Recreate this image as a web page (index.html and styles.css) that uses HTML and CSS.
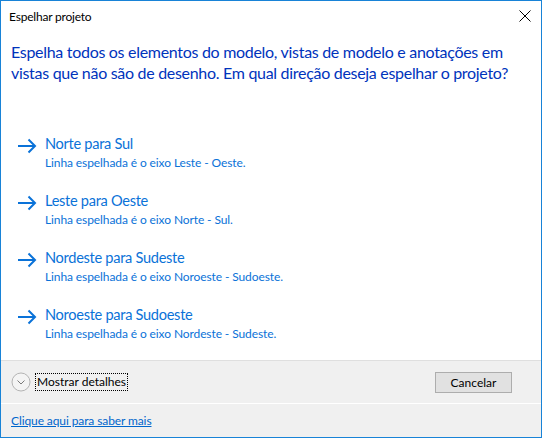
FILE: index.html
```html
<!DOCTYPE html>
<html lang="pt">
<head>
<meta charset="utf-8">
<title>Espelhar projeto</title>
<link rel="stylesheet" href="styles.css">
</head>
<body>
<div class="window">
  <div class="titlebar">
    <span class="title">Espelhar projeto</span>
    <span class="close" aria-label="Fechar">
      <svg width="12" height="12" viewBox="0 0 12 12"><path d="M0.5 0.5 L11.5 11.5 M11.5 0.5 L0.5 11.5" stroke="#000" stroke-width="1" fill="none"/></svg>
    </span>
  </div>
  <div class="content">
    <p class="instruction">Espelha todos os elementos do modelo, vistas de modelo e anotações em vistas que não são de desenho. Em qual direção deseja espelhar o projeto?</p>
    <div class="links">
      <div class="cmd">
        <svg class="arrow" width="20" height="16" viewBox="0 0 20 16"><path d="M1 8 H18 M11.5 1.5 L18 8 L11.5 14.5" stroke="currentColor" stroke-width="2" fill="none"/></svg>
        <div class="cmd-text">
          <div class="cmd-title">Norte para Sul</div>
          <div class="cmd-note">Linha espelhada é o eixo Leste - Oeste.</div>
        </div>
      </div>
      <div class="cmd">
        <svg class="arrow" width="20" height="16" viewBox="0 0 20 16"><path d="M1 8 H18 M11.5 1.5 L18 8 L11.5 14.5" stroke="currentColor" stroke-width="2" fill="none"/></svg>
        <div class="cmd-text">
          <div class="cmd-title">Leste para Oeste</div>
          <div class="cmd-note">Linha espelhada é o eixo Norte - Sul.</div>
        </div>
      </div>
      <div class="cmd">
        <svg class="arrow" width="20" height="16" viewBox="0 0 20 16"><path d="M1 8 H18 M11.5 1.5 L18 8 L11.5 14.5" stroke="currentColor" stroke-width="2" fill="none"/></svg>
        <div class="cmd-text">
          <div class="cmd-title">Nordeste para Sudeste</div>
          <div class="cmd-note">Linha espelhada é o eixo Noroeste - Sudoeste.</div>
        </div>
      </div>
      <div class="cmd">
        <svg class="arrow" width="20" height="16" viewBox="0 0 20 16"><path d="M1 8 H18 M11.5 1.5 L18 8 L11.5 14.5" stroke="currentColor" stroke-width="2" fill="none"/></svg>
        <div class="cmd-text">
          <div class="cmd-title">Noroeste para Sudoeste</div>
          <div class="cmd-note">Linha espelhada é o eixo Nordeste - Sudeste.</div>
        </div>
      </div>
    </div>
  </div>
  <div class="footer">
    <div class="expando">
      <svg class="chev" width="20" height="20" viewBox="0 0 20 20"><circle cx="10" cy="10" r="9" stroke="#b4b4b4" stroke-width="1" fill="#f4f4f4"/><path d="M6.5 8.5 L10 12 L13.5 8.5" stroke="#7a7a7a" stroke-width="1" fill="none"/></svg>
      <span class="expando-label">Mostrar detalhes</span>
    </div>
    <button class="btn">Cancelar</button>
  </div>
  <div class="footnote">
    <a class="more" href="#">Clique aqui para saber mais</a>
  </div>
</div>
</body>
</html>
```
FILE: styles.css
```css
html, body {
  margin: 0;
  padding: 0;
  background: #ffffff;
}
body {
  font-family: Lato, "Noto Sans", sans-serif;
}
.window {
  width: 542px;
  height: 438px;
  box-sizing: border-box;
  border: 1px solid #1883d7;
  display: flex;
  flex-direction: column;
  background: #ffffff;
}
.titlebar {
  height: 30px;
  display: flex;
  align-items: center;
  justify-content: space-between;
  padding: 0 10px 0 8px;
  flex: none;
}
.title {
  font-size: 12px;
  letter-spacing: -0.2px;
  color: #000;
}
.close {
  display: flex;
  width: 12px;
  height: 12px;
}
.content {
  flex: 1;
  padding: 10px 10px 0 10px;
}
.instruction {
  margin: 0;
  font-size: 16px;
  line-height: 21px;
  letter-spacing: -0.3px;
  color: #0033bc;
}
.links {
  margin-top: 51px;
  display: flex;
  flex-direction: column;
  gap: 19px;
}
.cmd {
  display: flex;
  align-items: flex-start;
  gap: 8px;
  padding-left: 6px;
  color: #0a72d8;
}
.arrow {
  margin-top: 4px;
  flex: none;
}
.cmd-title {
  font-size: 14.6px;
  line-height: 20px;
  letter-spacing: -0.3px;
}
.cmd-note {
  font-size: 12px;
  line-height: 18px;
  letter-spacing: -0.1px;
}
.footer {
  flex: none;
  height: 42px;
  background: #f0f0f0;
  border-top: 1px solid #dfdfdf;
  display: flex;
  align-items: center;
  justify-content: space-between;
  padding: 0 29px 0 10px;
}
.expando {
  display: flex;
  align-items: center;
  gap: 5px;
}
.expando-label {
  font-size: 12px;
  color: #000;
  outline: 1px dotted #000;
  padding: 0 1px;
  line-height: 16px;
}
.btn {
  width: 77px;
  height: 21px;
  background: #e1e1e1;
  border: 1px solid #adadad;
  font-family: inherit;
  font-size: 12px;
  color: #000;
  padding: 0;
}
.footnote {
  flex: none;
  height: 33px;
  background: #f0f0f0;
  border-top: 1px solid #ffffff;
  display: flex;
  align-items: center;
  padding-left: 10px;
}
.more {
  font-size: 12px;
  letter-spacing: -0.1px;
  color: #0066cc;
  text-decoration: underline;
}
```
